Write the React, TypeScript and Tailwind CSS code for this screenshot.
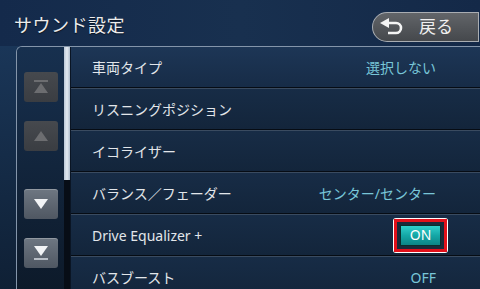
import React from "react";

const jp = { fontFamily: '"Noto Sans", "Noto Sans CJK JP", sans-serif' };

const rows: { label: string; value?: string; toggle?: boolean }[] = [
    { label: "車両タイプ", value: "選択しない" },
    { label: "リスニングポジション" },
    { label: "イコライザー" },
    { label: "バランス／フェーダー", value: "センター/センター" },
    { label: "Drive Equalizer +", toggle: true },
    { label: "バスブースト", value: "OFF" },
];

const SideButton = ({ kind, enabled }: { kind: "top" | "up" | "down" | "bottom"; enabled: boolean }) => {
    const fill = enabled ? "#f2f4f6" : "#6c6d70";
    return (
        <div
            className={
                enabled
                    ? "w-[34px] h-[30px] shrink-0 rounded-[3px] bg-gradient-to-b from-[#6e7782] to-[#4f5762] shadow-[inset_0_1px_0_rgba(255,255,255,0.25)] flex items-center justify-center"
                    : "w-[34px] h-[30px] shrink-0 rounded-[3px] bg-gradient-to-b from-[#46494e] to-[#3a3d42] flex items-center justify-center"
            }
        >
            <svg width="20" height="18" viewBox="0 0 20 18">
                {kind === "top" && (
                    <>
                        <rect x="3" y="2" width="14" height="2" fill={fill} />
                        <polygon points="10,5 17,15 3,15" fill={fill} />
                    </>
                )}
                {kind === "up" && <polygon points="10,4 17,14 3,14" fill={fill} />}
                {kind === "down" && <polygon points="3,4 17,4 10,14" fill={fill} />}
                {kind === "bottom" && (
                    <>
                        <polygon points="3,2 17,2 10,12" fill={fill} />
                        <rect x="3" y="14" width="14" height="2" fill="#b8bec6" />
                    </>
                )}
            </svg>
        </div>
    );
};

export default function App() {
    return (
        <div
            className="w-[480px] h-[289px] overflow-hidden flex flex-col bg-gradient-to-b from-[#132848] to-[#0f1f33]"
            style={jp}
        >
            {/* Header */}
            <div className="h-[46px] shrink-0 flex items-center justify-between pl-[14px] bg-gradient-to-r from-[#142a4b] via-[#18304f] to-[#142948]">
                <span className="text-[18px] text-[#ececec] tracking-[0.5px] mt-[4px] [text-shadow:0_1px_1px_rgba(0,0,0,0.6)]">
                    サウンド設定
                </span>
                <div className="w-[107px] h-[30px] mt-[8px] mr-[1px] rounded-l-full rounded-r-[6px] border border-[#a9adb2] bg-gradient-to-b from-[#626569] to-[#45484c] flex items-center pl-[7px] gap-[13px]">
                    <svg width="26" height="18" viewBox="0 0 26 18">
                        <path d="M8 5 H16 A5 5 0 0 1 16 15 H8" stroke="#f4f4f4" strokeWidth="2.6" fill="none" />
                        <polygon points="0,5 9,0 9,10" fill="#f4f4f4" />
                    </svg>
                    <span className="text-[17px] text-[#f0f0f0]">戻る</span>
                </div>
            </div>

            {/* Body */}
            <div className="flex-1 min-h-0 flex pl-[16px] bg-gradient-to-b from-[#1a3658] to-[#0f2035]">
                <div className="flex-1 flex border-t border-l border-[#8495aa] rounded-tl-[6px] overflow-hidden">
                    {/* Side controls */}
                    <div className="w-[47px] shrink-0 flex flex-col items-center pt-[25px] pl-[1px] bg-gradient-to-b from-[#17304f] to-[#0d1a2a]">
                        <SideButton kind="top" enabled={false} />
                        <div className="mt-[19px]">
                            <SideButton kind="up" enabled={false} />
                        </div>
                        <div className="mt-[38px]">
                            <SideButton kind="down" enabled />
                        </div>
                        <div className="mt-[19px]">
                            <SideButton kind="bottom" enabled />
                        </div>
                    </div>

                    {/* Scrollbar */}
                    <div className="w-[6px] shrink-0 flex flex-col bg-[#070d16]">
                        <div className="h-[133px] shrink-0 bg-gradient-to-r from-[#b9c6d6] via-[#e4ebf2] to-[#aebccc]" />
                    </div>

                    {/* Rows */}
                    <div className="flex-1 flex flex-col border-l border-[#0a1524]">
                        {rows.map((r, i) => (
                            <div key={i} className="flex flex-col shrink-0">
                                <div
                                    className={
                                        i === 0
                                            ? "h-[40px] flex items-center justify-between pl-[21px] pr-[44px] bg-gradient-to-b from-[#1d3656] to-[#172c47]"
                                            : "h-[40px] flex items-center justify-between pl-[21px] pr-[44px] bg-gradient-to-b from-[#172c46] to-[#13253b]"
                                    }
                                >
                                    <span className="text-[14px] text-[#e2e6ea]">{r.label}</span>
                                    {r.value && <span className="text-[14px] text-[#78c6d8]">{r.value}</span>}
                                    {r.toggle && (
                                        <div className="mr-[-12px] p-[1px] bg-white rounded-[3px]">
                                            <div className="border-[3px] border-[#e2101a] p-[3px] bg-[#1a2a3a]">
                                                <div className="w-[41px] h-[21px] border border-[#0a2c2c] bg-gradient-to-b from-[#2fd0cc] via-[#14a7a6] to-[#0c8586] flex items-center justify-center">
                                                    <span className="text-[14px] text-white leading-none">ON</span>
                                                </div>
                                            </div>
                                        </div>
                                    )}
                                </div>
                                <div className="h-[1px] bg-[#060c14]" />
                                <div className="h-[1px] bg-[#3a4b60]" />
                            </div>
                        ))}
                    </div>
                </div>
            </div>
        </div>
    );
}
